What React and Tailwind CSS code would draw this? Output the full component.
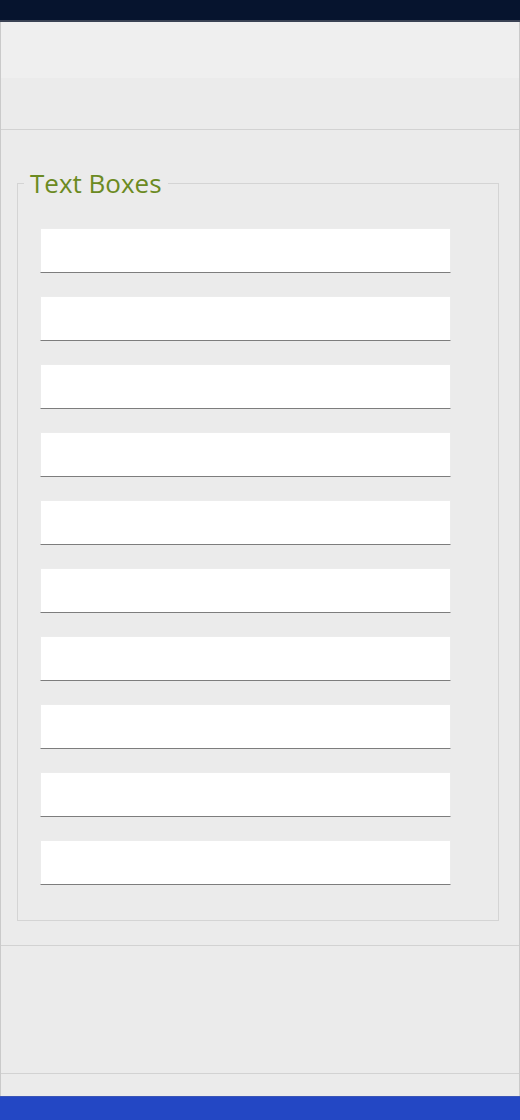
import React from "react";

const boxes = Array.from({ length: 10 });

const App = () => {
    return (
        <div className="w-[520px] h-[1120px] flex flex-col bg-[#ebebeb] overflow-hidden" style={{ fontFamily: '"Open Sans", "Noto Sans", sans-serif' }}>
            {/* window title strip */}
            <div className="h-[20px] bg-[#06142e] border-b-2 border-[#3a4254] box-content" />

            <div className="flex-1 flex flex-col border-x border-[#cacaca]">
                {/* header area */}
                <div className="h-[108px] border-b border-[#d2d2d2] flex flex-col">
                    <div className="h-[56px] bg-[#efefef]" />
                    <div className="flex-1 bg-[#ebebeb]" />
                </div>

                {/* content */}
                <div className="pt-[36px] pb-[24px] pl-[16px] pr-[20px] border-b border-[#d2d2d2]">
                    <fieldset className="border border-[#d4d4d4] pl-[22px] pr-[46px] pb-[35px] pt-[28px]">
                        <legend className="-ml-[16px] px-[6px] text-[26px] leading-[34px] text-[#6b8a22]">Text Boxes</legend>
                        <div className="flex flex-col gap-[23px]">
                            {boxes.map((_, i) => (
                                <input
                                    key={i}
                                    type="text"
                                    className="w-[411px] h-[45px] bg-white border border-[#ececec] border-b-[#7d7d7d] outline-none"
                                />
                            ))}
                        </div>
                    </fieldset>
                </div>

                <div className="h-[128px] border-b border-[#d2d2d2]" />
                <div className="flex-1" />
            </div>

            {/* task bar */}
            <div className="h-[24px] bg-[#2347c4] border-t border-[#3b55b5]" />
        </div>
    );
};

export default App;
